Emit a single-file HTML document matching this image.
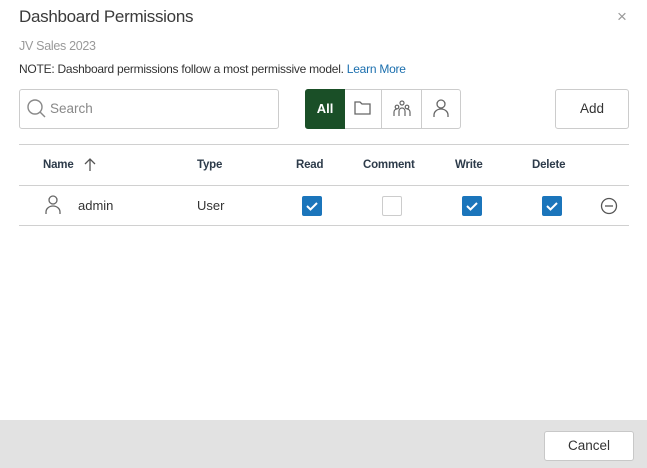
<!DOCTYPE html>
<html><head><style>
*{box-sizing:border-box;margin:0;padding:0}
body{width:647px;height:468px;background:#fff;font-family:"Liberation Sans",sans-serif;position:relative;overflow:hidden;color:#333}
.a{position:absolute;white-space:nowrap}
.cb{position:absolute;width:20px;height:20px;border-radius:2px;background:#1b75bb;top:196px}
.cb svg{position:absolute;left:3px;top:4px}
.th{position:absolute;top:159px;font-size:11.5px;font-weight:bold;color:#2d3b4a;letter-spacing:-0.2px}
.line{position:absolute;left:19px;width:610px;height:1px;background:#d0d0d0}
</style></head><body>
<div class="a" style="left:19px;top:7px;font-size:17px;color:#3a3a3a;letter-spacing:-0.3px">Dashboard Permissions</div>
<div class="a" style="left:617px;top:7px;font-size:17px;color:#999">×</div>
<div class="a" style="left:19px;top:39px;font-size:12.5px;color:#999;letter-spacing:-0.3px">JV Sales 2023</div>
<div class="a" style="left:19px;top:62px;font-size:12px;color:#333;letter-spacing:-0.25px">NOTE: Dashboard permissions follow a most permissive model. <span style="color:#1b6fae">Learn More</span></div>
<div class="a" style="left:19px;top:89px;width:260px;height:40px;border:1px solid #ccc;border-radius:3px"></div>
<svg class="a" style="left:26px;top:98px" width="22" height="22" viewBox="0 0 22 22"><circle cx="9" cy="9" r="7" fill="none" stroke="#888" stroke-width="1.4"/><line x1="14" y1="14" x2="19" y2="19" stroke="#888" stroke-width="1.4"/></svg>
<div class="a" style="left:50px;top:101px;font-size:13.5px;color:#888">Search</div>
<div class="a" style="left:305px;top:89px;width:156px;height:40px;border:1px solid #ccc;border-radius:3px"></div>
<div class="a" style="left:305px;top:89px;width:40px;height:40px;background:#1a4f27;border-radius:3px 0 0 3px;color:#fff;font-weight:bold;font-size:13px;text-align:center;line-height:40px">All</div>
<div class="a" style="left:381px;top:89px;width:1px;height:40px;background:#ccc"></div>
<div class="a" style="left:421px;top:89px;width:1px;height:40px;background:#ccc"></div>
<svg class="a" style="left:354px;top:100px" width="18" height="16" viewBox="0 0 18 16"><path d="M1 2h5l2 2h8v10H1z" fill="none" stroke="#666" stroke-width="1.3"/></svg>
<svg class="a" style="left:392px;top:99px" width="20" height="20" viewBox="0 0 20 20" fill="none" stroke="#666" stroke-width="1.2"><circle cx="10" cy="4" r="2"/><circle cx="5" cy="8" r="1.8"/><circle cx="15" cy="8" r="1.8"/><path d="M7 17v-5a3 3 0 0 1 6 0v5M2 17v-4a3 3 0 0 1 3-3M18 17v-4a3 3 0 0 0-3-3"/></svg>
<svg class="a" style="left:432px;top:98px" width="18" height="20" viewBox="0 0 18 20" fill="none" stroke="#666" stroke-width="1.3"><circle cx="9" cy="6" r="4"/><path d="M2 19v-2a7 6 0 0 1 14 0v2"/></svg>
<div class="a" style="left:555px;top:89px;width:74px;height:40px;border:1px solid #ccc;border-radius:3px;text-align:center;line-height:38px;font-size:13.5px;color:#333">Add</div>
<div class="line" style="top:144px"></div>
<div class="th" style="left:43px">Name</div>
<svg class="a" style="left:84px;top:158px" width="12" height="13" viewBox="0 0 12 13" fill="none" stroke="#555" stroke-width="1.3"><path d="M6 13V1M1 6l5-5 5 5"/></svg>
<div class="th" style="left:197px">Type</div>
<div class="th" style="left:296px">Read</div>
<div class="th" style="left:363px">Comment</div>
<div class="th" style="left:455px">Write</div>
<div class="th" style="left:532px">Delete</div>
<div class="line" style="top:185px"></div>
<svg class="a" style="left:44px;top:195px" width="18" height="20" viewBox="0 0 18 20" fill="none" stroke="#666" stroke-width="1.3"><circle cx="9" cy="5" r="4"/><path d="M2 19v-2a7 6 0 0 1 14 0v2"/></svg>
<div class="a" style="left:78px;top:198px;font-size:13px;color:#333">admin</div>
<div class="a" style="left:197px;top:198px;font-size:13px;color:#333">User</div>
<div class="cb" style="left:302px"><svg width="14" height="12" viewBox="0 0 14 12"><path d="M2 6l3.5 3.5L12 3" fill="none" stroke="#fff" stroke-width="2"/></svg></div>
<div class="cb" style="left:382px;background:#fff;border:1px solid #ccc"></div>
<div class="cb" style="left:462px"><svg width="14" height="12" viewBox="0 0 14 12"><path d="M2 6l3.5 3.5L12 3" fill="none" stroke="#fff" stroke-width="2"/></svg></div>
<div class="cb" style="left:542px"><svg width="14" height="12" viewBox="0 0 14 12"><path d="M2 6l3.5 3.5L12 3" fill="none" stroke="#fff" stroke-width="2"/></svg></div>
<svg class="a" style="left:600px;top:197px" width="18" height="18" viewBox="0 0 18 18" fill="none" stroke="#555" stroke-width="1.3"><circle cx="9" cy="9" r="7.5"/><path d="M5 9h8"/></svg>
<div class="line" style="top:225px"></div>
<div class="a" style="left:0;top:420px;width:647px;height:48px;background:#e2e2e2"></div>
<div class="a" style="left:544px;top:431px;width:90px;height:30px;background:#fff;border:1px solid #c8c8c8;border-radius:3px;text-align:center;line-height:28px;font-size:13.5px;color:#333">Cancel</div>
</body></html>
